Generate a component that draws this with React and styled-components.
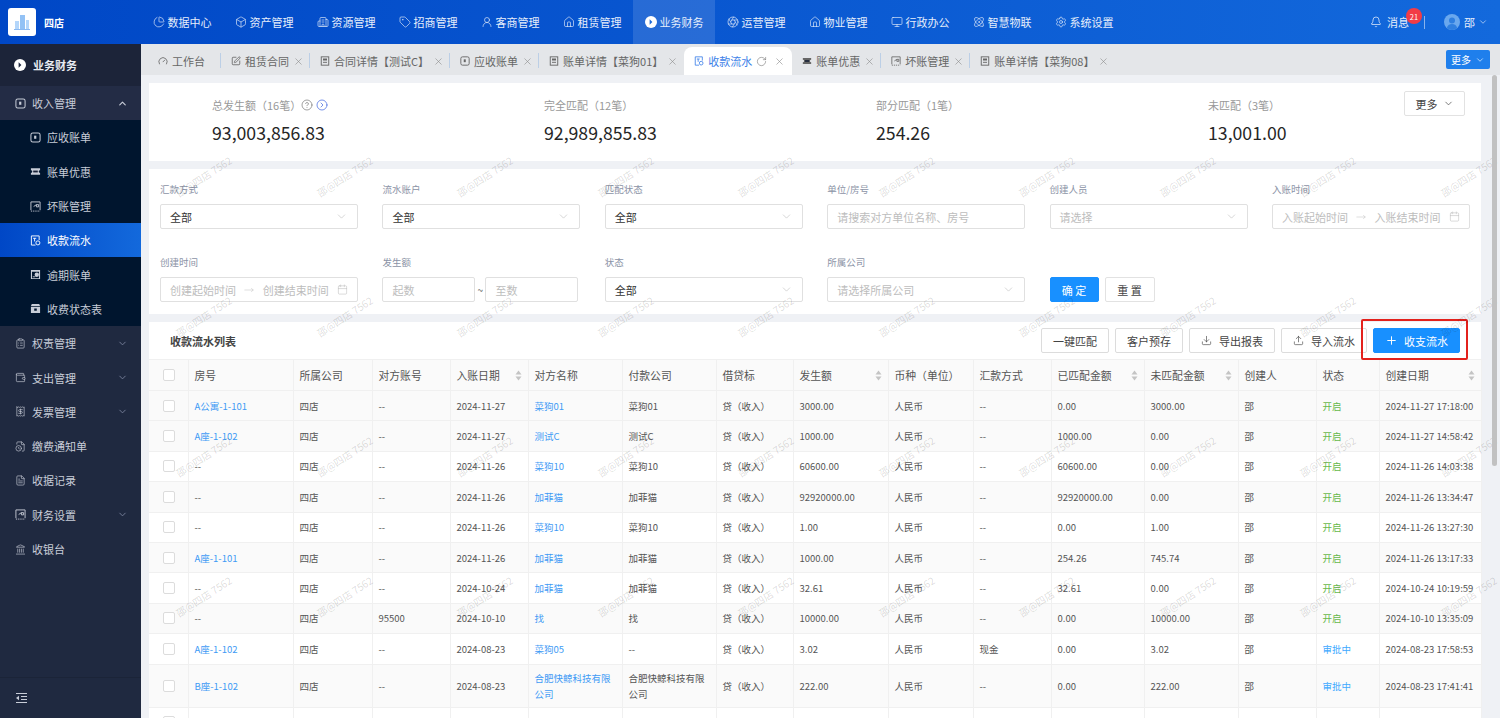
import React from 'react';
import styled, { createGlobalStyle } from 'styled-components';
import {
  ChartPie, Box, Building2, Tag, UserRound, House, Aperture, Monitor, Atom, Settings,
  Bell, ChevronDown, ChevronUp, Plus, Download, Upload, CircleHelp, CircleChevronRight,
  Calendar, MoveRight, X, RotateCw, Gauge, SquarePen, FileText, Receipt, ClipboardList,
  FileClock, Wallet, Landmark,
} from 'lucide-react';

const GlobalStyle = createGlobalStyle`
  html, body, #root {
    margin: 0;
    height: 100%;
    overflow: hidden;
  }
  body {
    font-family: "Noto Sans CJK SC", "Noto Sans", sans-serif;
    color: #333;
  }
  * {
    box-sizing: border-box;
  }
`;

// small drawn icons that the packages don't have
const BillIcon = ({ size = 11 }) => (
  <svg width={size} height={size} viewBox="0 0 12 12" fill="none" stroke="currentColor" strokeWidth="1.1">
    <rect x="1" y="1" width="10" height="10" rx="2" />
    <rect x="4.5" y="4" width="2.4" height="3.4" fill="currentColor" stroke="none" />
  </svg>
);

const TicketIcon = ({ size = 11 }) => (
  <svg width={size} height={size} viewBox="0 0 12 12" fill="currentColor">
    <path d="M1 2.5h10v2a1.5 1.5 0 0 0 0 3v2H1v-2a1.5 1.5 0 0 0 0-3z" />
    <rect x="3.5" y="5" width="5" height="2" fill="#1a2238" />
  </svg>
);

const BadDebtIcon = ({ size = 11 }) => (
  <svg width={size} height={size} viewBox="0 0 12 12" fill="none" stroke="currentColor" strokeWidth="1">
    <path d="M1 10V1h10v9" />
    <path d="M1 11h10" strokeDasharray="1.4 1" />
    <path d="M7 4h2.4v2.4H7zM4 6l3-2" />
  </svg>
);

const FlowIcon = ({ size = 11 }) => (
  <svg width={size} height={size} viewBox="0 0 12 12" fill="none" stroke="currentColor" strokeWidth="1">
    <path d="M6 11H1.5V1h8.5v4.5" />
    <path d="M3.4 3.6h3.4M5 3.6v3.4" />
    <circle cx="8.6" cy="8.6" r="2.2" />
  </svg>
);

const OverdueIcon = ({ size = 11 }) => (
  <svg width={size} height={size} viewBox="0 0 12 12" fill="currentColor">
    <path d="M1 1h10v10H1zM2.2 3v7h7.6V3z" fillRule="evenodd" />
    <circle cx="7.4" cy="6.2" r="2.4" />
    <rect x="3" y="8" width="2.4" height="1" />
  </svg>
);

const StatusIcon = ({ size = 11 }) => (
  <svg width={size} height={size} viewBox="0 0 12 12" fill="currentColor">
    <path d="M2 1h8l1 2.4H1z" />
    <path d="M1 4.2h10V11H1zM4.6 6v2.4h2.8V6z" fillRule="evenodd" />
  </svg>
);

const DetailIcon = ({ size = 10 }) => (
  <svg width={size} height={size} viewBox="0 0 12 12" fill="none" stroke="currentColor" strokeWidth="1.1">
    <rect x="1.5" y="1" width="9" height="10" />
    <rect x="3.6" y="3" width="4.8" height="2.4" fill="currentColor" stroke="none" />
    <path d="M3.6 7.6h4.8" />
  </svg>
);

const CoinIcon = ({ size = 12, hole = '#1f6ad8' }) => (
  <svg width={size} height={size} viewBox="0 0 12 12">
    <circle cx="6" cy="6" r="6" fill="#fff" />
    <path d="M4.6 3.2 7.4 6 4.6 8.8z" fill={hole} />
  </svg>
);

const CollapseIcon = () => (
  <svg width="13" height="12" viewBox="0 0 13 12" fill="none" stroke="currentColor" strokeWidth="1.2">
    <path d="M1 1.5h11M6 4.5h6M6 7.5h6M1 10.5h11" />
    <path d="M4 3.8v4.4L1 6z" fill="currentColor" stroke="none" />
  </svg>
);

const LogoIcon = () => (
  <svg width="16" height="16" viewBox="0 0 16 16" fill="#b4d6fa">
    <rect x="1" y="7" width="4" height="8" />
    <rect x="6" y="1" width="5" height="14" fill="#93c2f5" />
    <rect x="12" y="6" width="3" height="9" />
    <path d="M0 15h16v1H0z" fill="#8ab9f2" />
  </svg>
);

const AvatarIcon = () => (
  <svg width="16" height="16" viewBox="0 0 16 16">
    <circle cx="8" cy="8" r="8" fill="#6aa8ee" />
    <circle cx="8" cy="6.4" r="3" fill="#2f7fe0" />
    <path d="M2.8 14a5.4 5.4 0 0 1 10.4 0A8 8 0 0 1 2.8 14z" fill="#2f7fe0" />
  </svg>
);

const SortIcon = () => (
  <svg width="7" height="11" viewBox="0 0 7 11" fill="#c4c4c4">
    <path d="M3.5 0.5 6.5 4.5H0.5zM3.5 10.5 0.5 6.5H6.5z" />
  </svg>
);

const navItems = [
  { label: '数据中心', icon: <ChartPie size={12} strokeWidth={1.3} /> },
  { label: '资产管理', icon: <Box size={12} strokeWidth={1.3} /> },
  { label: '资源管理', icon: <Building2 size={12} strokeWidth={1.3} /> },
  { label: '招商管理', icon: <Tag size={12} strokeWidth={1.3} /> },
  { label: '客商管理', icon: <UserRound size={12} strokeWidth={1.3} /> },
  { label: '租赁管理', icon: <House size={12} strokeWidth={1.3} /> },
  { label: '业务财务', icon: <CoinIcon />, active: true },
  { label: '运营管理', icon: <Aperture size={12} strokeWidth={1.3} /> },
  { label: '物业管理', icon: <House size={12} strokeWidth={1.3} /> },
  { label: '行政办公', icon: <Monitor size={12} strokeWidth={1.3} /> },
  { label: '智慧物联', icon: <Atom size={12} strokeWidth={1.3} /> },
  { label: '系统设置', icon: <Settings size={12} strokeWidth={1.3} /> },
];

const tabs = [
  { label: '工作台', icon: <Gauge size={10} />, home: true },
  { label: '租赁合同', icon: <SquarePen size={10} /> },
  { label: '合同详情【测试C】', icon: <DetailIcon /> },
  { label: '应收账单', icon: <BillIcon size={10} /> },
  { label: '账单详情【菜狗01】', icon: <DetailIcon />, last: true },
  { label: '收款流水', icon: <FlowIcon size={10} />, active: true },
  { label: '账单优惠', icon: <TicketIcon size={10} /> },
  { label: '坏账管理', icon: <BadDebtIcon size={10} /> },
  { label: '账单详情【菜狗08】', icon: <DetailIcon />, last: true },
];

const subMenu = [
  { label: '应收账单', icon: <BillIcon /> },
  { label: '账单优惠', icon: <TicketIcon /> },
  { label: '坏账管理', icon: <BadDebtIcon /> },
  { label: '收款流水', icon: <FlowIcon />, active: true },
  { label: '逾期账单', icon: <OverdueIcon /> },
  { label: '收费状态表', icon: <StatusIcon /> },
];

const lowerMenu = [
  { label: '权责管理', icon: <ClipboardList size={11} strokeWidth={1.4} />, arrow: true },
  { label: '支出管理', icon: <Wallet size={11} strokeWidth={1.4} />, arrow: true },
  { label: '发票管理', icon: <Receipt size={11} strokeWidth={1.4} />, arrow: true },
  { label: '缴费通知单', icon: <FileClock size={11} strokeWidth={1.4} /> },
  { label: '收据记录', icon: <FileText size={11} strokeWidth={1.4} /> },
  { label: '财务设置', icon: <BadDebtIcon />, arrow: true },
  { label: '收银台', icon: <Landmark size={11} strokeWidth={1.4} /> },
];

const stats = [
  { label: '总发生额（16笔）', value: '93,003,856.83', help: true },
  { label: '完全匹配（12笔）', value: '92,989,855.83' },
  { label: '部分匹配（1笔）', value: '254.26' },
  { label: '未匹配（3笔）', value: '13,001.00' },
];

const columns = [
  { width: 39 },
  { width: 105, title: '房号' },
  { width: 79, title: '所属公司' },
  { width: 78, title: '对方账号' },
  { width: 78, title: '入账日期', sort: true },
  { width: 94, title: '对方名称' },
  { width: 94, title: '付款公司' },
  { width: 77, title: '借贷标' },
  { width: 95, title: '发生额', sort: true },
  { width: 85, title: '币种（单位）' },
  { width: 78, title: '汇款方式' },
  { width: 93, title: '已匹配金额', sort: true },
  { width: 94, title: '未匹配金额', sort: true },
  { width: 78, title: '创建人' },
  { width: 63, title: '状态' },
  { width: 102, title: '创建日期', sort: true },
];

const rows = [
  ['A公寓-1-101', '--', '2024-11-27', '菜狗01', '菜狗01', '3000.00', '--', '0.00', '3000.00', '开启', '2024-11-27 17:18:00'],
  ['A座-1-102', '--', '2024-11-27', '测试C', '测试C', '1000.00', '--', '1000.00', '0.00', '开启', '2024-11-27 14:58:42'],
  ['--', '--', '2024-11-26', '菜狗10', '菜狗10', '60600.00', '--', '60600.00', '0.00', '开启', '2024-11-26 14:03:38'],
  ['--', '--', '2024-11-26', '加菲猫', '加菲猫', '92920000.00', '--', '92920000.00', '0.00', '开启', '2024-11-26 13:34:47'],
  ['--', '--', '2024-11-26', '菜狗10', '菜狗10', '1.00', '--', '0.00', '1.00', '开启', '2024-11-26 13:27:30'],
  ['A座-1-101', '--', '2024-11-26', '加菲猫', '加菲猫', '1000.00', '--', '254.26', '745.74', '开启', '2024-11-26 13:17:33'],
  ['--', '--', '2024-10-24', '加菲猫', '加菲猫', '32.61', '--', '32.61', '0.00', '开启', '2024-10-24 10:19:59'],
  ['--', '95500', '2024-10-10', '找', '找', '10000.00', '--', '0.00', '10000.00', '开启', '2024-10-10 13:35:09'],
  ['A座-1-102', '--', '2024-08-23', '菜狗05', '--', '3.02', '现金', '0.00', '3.02', '审批中', '2024-08-23 17:58:53'],
  ['B座-1-102', '--', '2024-08-23', '合肥快鲸科技有限公司', '合肥快鲸科技有限公司', '222.00', '--', '0.00', '222.00', '审批中', '2024-08-23 17:41:41'],
];

const App = () => {
  return (
    <Page>
      <GlobalStyle />
      <Header>
        <Brand>
          <LogoBox><LogoIcon /></LogoBox>
          <BrandName>四店</BrandName>
        </Brand>
        <Nav>
          {navItems.map((item) => (
            <NavItem key={item.label} $active={item.active}>
              {item.icon}
              {item.label}
            </NavItem>
          ))}
        </Nav>
        <HeaderRight>
          <Bell size={12} strokeWidth={1.5} />
          <MessageText>
            消息
            <Badge>21</Badge>
          </MessageText>
          <HeaderDivider />
          <AvatarIcon />
          <UserName>邵</UserName>
          <ChevronDown size={10} strokeWidth={1.5} />
        </HeaderRight>
      </Header>

      <Body>
        <Sidebar>
          <SideTitle>
            <CoinIcon hole="#1f2940" />
            业务财务
          </SideTitle>
          <SideItem $open>
            <BillIcon />
            <SideLabel>收入管理</SideLabel>
            <ChevronUp size={11} strokeWidth={2.5} />
          </SideItem>
          <SubList>
            {subMenu.map((item) => (
              <SubItem key={item.label} $active={item.active}>
                {item.icon}
                {item.label}
              </SubItem>
            ))}
          </SubList>
          {lowerMenu.map((item) => (
            <SideItem key={item.label}>
              {item.icon}
              <SideLabel>{item.label}</SideLabel>
              {item.arrow && <ChevronDown size={11} strokeWidth={2} color="#77809a" />}
            </SideItem>
          ))}
          <SideFooter>
            <CollapseIcon />
          </SideFooter>
        </Sidebar>

        <Main>
          <TabBar>
            {tabs.map((tab, i) => (
              <Tab
                key={tab.label}
                $active={tab.active}
                $home={tab.home}
                $divider={!tab.active && !tab.last && i < tabs.length - 1}
              >
                {tab.icon}
                <span>{tab.label}</span>
                {tab.active && <RotateCw size={11} strokeWidth={1.3} color="#777" />}
                {!tab.home && <CloseIcon size={11} strokeWidth={1.3} $active={tab.active} />}
              </Tab>
            ))}
            <MoreTabs>
              更多
              <ChevronDown size={10} strokeWidth={1.5} />
            </MoreTabs>
          </TabBar>

          <Content>
            <SummaryCard>
              {stats.map((stat) => (
                <Stat key={stat.label}>
                  <StatLabel>
                    {stat.label}
                    {stat.help && (
                      <>
                        <HelpIcon size={12} strokeWidth={1.4} />
                        <CircleChevronRight size={12} strokeWidth={1.5} color="#4a6ee0" />
                      </>
                    )}
                  </StatLabel>
                  <StatValue>{stat.value}</StatValue>
                </Stat>
              ))}
              <SummaryMore>
                更多
                <ChevronDown size={11} strokeWidth={1.5} />
              </SummaryMore>
            </SummaryCard>

            <FilterCard>
              <Field>
                <FieldLabel>汇款方式</FieldLabel>
                <Control>全部<Arrow /></Control>
              </Field>
              <Field>
                <FieldLabel>流水账户</FieldLabel>
                <Control>全部<Arrow /></Control>
              </Field>
              <Field>
                <FieldLabel>匹配状态</FieldLabel>
                <Control>全部<Arrow /></Control>
              </Field>
              <Field>
                <FieldLabel>单位/房号</FieldLabel>
                <Control $empty>请搜索对方单位名称、房号</Control>
              </Field>
              <Field>
                <FieldLabel>创建人员</FieldLabel>
                <Control $empty>请选择<Arrow /></Control>
              </Field>
              <Field>
                <FieldLabel>入账时间</FieldLabel>
                <Control $empty>
                  入账起始时间
                  <MoveRight size={10} strokeWidth={1.2} />
                  入账结束时间
                  <Calendar size={11} strokeWidth={1.2} />
                </Control>
              </Field>
              <Field>
                <FieldLabel>创建时间</FieldLabel>
                <Control $empty>
                  创建起始时间
                  <MoveRight size={10} strokeWidth={1.2} />
                  创建结束时间
                  <Calendar size={11} strokeWidth={1.2} />
                </Control>
              </Field>
              <Field>
                <FieldLabel>发生额</FieldLabel>
                <RangeRow>
                  <RangeControl $empty>起数</RangeControl>
                  <RangeDash>~</RangeDash>
                  <RangeControl $empty>至数</RangeControl>
                </RangeRow>
              </Field>
              <Field>
                <FieldLabel>状态</FieldLabel>
                <Control>全部<Arrow /></Control>
              </Field>
              <Field>
                <FieldLabel>所属公司</FieldLabel>
                <Control $empty>请选择所属公司<Arrow /></Control>
              </Field>
              <FilterActions>
                <FilterButton $primary>确 定</FilterButton>
                <FilterButton>重 置</FilterButton>
              </FilterActions>
            </FilterCard>

            <TableCard>
              <Toolbar>
                <ListTitle>收款流水列表</ListTitle>
                <ToolButton>一键匹配</ToolButton>
                <ToolButton>客户预存</ToolButton>
                <ToolButton><Download size={11} strokeWidth={1.4} />导出报表</ToolButton>
                <ToolButton><Upload size={11} strokeWidth={1.4} />导入流水</ToolButton>
                <PrimaryWrap>
                  <ToolButton $primary><Plus size={13} strokeWidth={1.8} />收支流水</ToolButton>
                  <RedMark />
                </PrimaryWrap>
              </Toolbar>
              <Table>
                <colgroup>
                  {columns.map((col, i) => (
                    <col key={i} width={col.width} />
                  ))}
                </colgroup>
                <thead>
                  <tr>
                    {columns.map((col, i) => (
                      <Th key={i}>
                        {i === 0 ? <Check /> : (
                          <ThInner>
                            {col.title}
                            {col.sort && <SortIcon />}
                          </ThInner>
                        )}
                      </Th>
                    ))}
                  </tr>
                </thead>
                <tbody>
                  {rows.map((r, i) => (
                    <Row key={i} $grey={i === 0 || i % 2 === 1} $tall={i === 9}>
                      <Td><Check /></Td>
                      <Td $link={r[0] !== '--'}>{r[0]}</Td>
                      <Td>四店</Td>
                      <Td>{r[1]}</Td>
                      <Td>{r[2]}</Td>
                      <Td $link>{r[3]}</Td>
                      <Td>{r[4]}</Td>
                      <Td>贷（收入）</Td>
                      <Td>{r[5]}</Td>
                      <Td>人民币</Td>
                      <Td>{r[6]}</Td>
                      <Td>{r[7]}</Td>
                      <Td>{r[8]}</Td>
                      <Td>邵</Td>
                      <Td $status={r[9]}>{r[9]}</Td>
                      <Td>{r[10]}</Td>
                    </Row>
                  ))}
                  <Row>
                    {columns.map((col, i) => (
                      <Td key={i}>{i === 0 && <Check />}</Td>
                    ))}
                  </Row>
                </tbody>
              </Table>
            </TableCard>

            <Watermarks>
              {Array.from({ length: 40 }).map((_, i) => (
                <Mark key={i}>邵@四店 7562</Mark>
              ))}
            </Watermarks>
            <ScrollThumb />
          </Content>
        </Main>
      </Body>
    </Page>
  );
};

const Page = styled.div`
  height: 100vh;
  display: flex;
  flex-direction: column;
  overflow: hidden;
`;

const Header = styled.header`
  height: 44px;
  flex: none;
  display: flex;
  align-items: stretch;
  color: #e6eefb;
  background: linear-gradient(90deg, #0047c6 0%, #1369dc 100%);
`;

const Brand = styled.div`
  width: 141px;
  flex: none;
  display: flex;
  align-items: center;
  gap: 8px;
  padding-left: 8px;
`;

const LogoBox = styled.div`
  width: 28px;
  height: 28px;
  border-radius: 3px;
  background: #fff;
  display: flex;
  align-items: center;
  justify-content: center;
`;

const BrandName = styled.span`
  font-size: 10px;
  font-weight: 700;
  color: #fff;
`;

const Nav = styled.nav`
  display: flex;
`;

const NavItem = styled.div`
  width: 82px;
  display: flex;
  align-items: center;
  justify-content: center;
  gap: 3px;
  font-size: 11px;
  white-space: nowrap;
  background: ${(p) => (p.$active ? 'rgba(255, 255, 255, 0.13)' : 'transparent')};
`;

const HeaderRight = styled.div`
  margin-left: auto;
  display: flex;
  align-items: center;
  padding-right: 12px;
`;

const MessageText = styled.span`
  position: relative;
  font-size: 11px;
  margin-left: 5px;
`;

const Badge = styled.span`
  position: absolute;
  left: 19px;
  top: -6px;
  width: 16px;
  height: 16px;
  border-radius: 50%;
  background: #f23c46;
  color: #fff;
  font-size: 7.5px;
  display: flex;
  align-items: center;
  justify-content: center;
`;

const HeaderDivider = styled.span`
  width: 1px;
  height: 13px;
  background: rgba(255, 255, 255, 0.5);
  margin: 0 19px 0 15px;
`;

const UserName = styled.span`
  font-size: 11px;
  margin: 0 3px 0 4px;
`;

const Body = styled.div`
  flex: 1;
  min-height: 0;
  display: flex;
`;

const Sidebar = styled.aside`
  width: 141px;
  flex: none;
  display: flex;
  flex-direction: column;
  background: #1f2940;
  color: #c8cdd8;
  font-size: 11px;
`;

const SideTitle = styled.div`
  height: 42px;
  flex: none;
  display: flex;
  align-items: center;
  gap: 7px;
  padding-left: 14px;
  color: #e8ebf1;
  font-weight: 700;
  background: #1c2439;
`;

const SideItem = styled.div`
  height: 34.3px;
  flex: none;
  display: flex;
  align-items: center;
  gap: 6px;
  padding: 0 13px 0 15px;
  background: ${(p) => (p.$open ? '#232c45' : 'transparent')};
`;

const SideLabel = styled.span`
  flex: 1;
`;

const SubList = styled.div`
  background: #00152e;
`;

const SubItem = styled.div`
  height: 34.3px;
  display: flex;
  align-items: center;
  gap: 6px;
  padding-left: 30px;
  color: ${(p) => (p.$active ? '#fff' : '#c8cdd8')};
  background: ${(p) => (p.$active ? 'linear-gradient(90deg, #0047c6 0%, #1369dc 100%)' : 'transparent')};
`;

const SideFooter = styled.div`
  margin-top: auto;
  height: 41px;
  flex: none;
  display: flex;
  align-items: center;
  padding-left: 15px;
  border-top: 1px solid #1b2438;
`;

const Main = styled.main`
  flex: 1;
  min-width: 0;
  display: flex;
  flex-direction: column;
`;

const TabBar = styled.div`
  height: 31px;
  flex: none;
  display: flex;
  align-items: flex-end;
  padding: 0 10px 0 7px;
  background: #e4e6e9;
`;

const tabPadding = (p) => {
  if (p.$home) return '0 16px 0 10px';
  if (p.$active) return '0 7px 0 10px';
  return '0 6px 0 10px';
};

const Tab = styled.div`
  position: relative;
  height: 28px;
  display: flex;
  align-items: center;
  gap: 4px;
  padding: ${tabPadding};
  font-size: 11px;
  white-space: nowrap;
  color: ${(p) => (p.$active ? '#3c7fe8' : '#666')};
  background: ${(p) => (p.$active ? '#fff' : 'transparent')};
  border-radius: ${(p) => (p.$active ? '8px 8px 0 0' : '0')};

  &::after {
    content: '';
    display: ${(p) => (p.$divider ? 'block' : 'none')};
    position: absolute;
    right: 0;
    top: 6px;
    height: 15px;
    width: 1px;
    background: #bccfe6;
  }
`;

const CloseIcon = styled(X)`
  color: #888;
  margin-left: ${(p) => (p.$active ? '3px' : '0')};
`;

const MoreTabs = styled.div`
  margin: 0 0 6px auto;
  width: 44px;
  height: 19px;
  flex: none;
  display: flex;
  align-items: center;
  justify-content: center;
  gap: 4px;
  border-radius: 2px;
  font-size: 10px;
  color: #fff;
  background: #1f7fec;
`;

const Content = styled.div`
  position: relative;
  flex: 1;
  min-height: 0;
  overflow: hidden;
  display: flex;
  flex-direction: column;
  gap: 8px;
  padding: 8px 19px 0 8px;
  background: #eff1f5;
`;

// the page's scrollbar, headless chrome doesn't paint a real one
const ScrollThumb = styled.div`
  position: absolute;
  top: 0;
  right: 3px;
  width: 5px;
  height: 391px;
  border-radius: 3px;
  background: #c1c1c1;
`;

const SummaryCard = styled.section`
  flex: none;
  height: 78px;
  display: grid;
  grid-template-columns: repeat(4, 332px);
  padding: 14px 0 0 63px;
  background: #fff;
  position: relative;
`;

const Stat = styled.div`
  display: flex;
  flex-direction: column;
  gap: 6px;
`;

const StatLabel = styled.div`
  display: flex;
  align-items: center;
  gap: 3px;
  font-size: 11px;
  line-height: 16px;
  color: #999;
`;

const HelpIcon = styled(CircleHelp)`
  color: #777;
  margin-left: -3px;
`;

const StatValue = styled.div`
  font-size: 17.7px;
  line-height: 26px;
  color: #262626;
`;

// sits in the card's corner, beside the stats
const SummaryMore = styled.div`
  position: absolute;
  right: 16px;
  top: 8px;
  width: 61px;
  height: 25px;
  display: flex;
  align-items: center;
  justify-content: center;
  gap: 5px;
  font-size: 11px;
  color: #444;
  background: #fff;
  border: 1px solid #e2e2e2;
  border-radius: 2px;
`;

const FilterCard = styled.section`
  flex: none;
  height: 145px;
  display: grid;
  grid-template-columns: repeat(6, 198px);
  column-gap: 24.4px;
  row-gap: 26px;
  align-content: start;
  padding: 13px 0 0 11px;
  background: #fff;
`;

const Field = styled.div`
  display: flex;
  flex-direction: column;
  gap: 8px;
`;

const FieldLabel = styled.div`
  font-size: 9.5px;
  line-height: 14px;
  color: #8b93a6;
`;

const Control = styled.div`
  height: 25px;
  display: flex;
  align-items: center;
  justify-content: space-between;
  padding: 0 9px;
  font-size: 11px;
  color: ${(p) => (p.$empty ? '#bdbdbd' : '#333')};
  background: #fff;
  border: 1px solid #e0e0e0;
  border-radius: 2px;
  white-space: nowrap;
`;

const Arrow = styled(ChevronDown).attrs({ size: 13, strokeWidth: 1 })`
  color: #b5b5b5;
`;

const RangeRow = styled.div`
  width: 196px;
  display: flex;
  align-items: center;
`;

const RangeControl = styled(Control)`
  flex: 1;
`;

const RangeDash = styled.span`
  width: 10px;
  text-align: center;
  font-size: 10px;
  color: #666;
`;

const FilterActions = styled.div`
  display: flex;
  align-items: flex-end;
  gap: 6px;
`;

const FilterButton = styled.div`
  width: ${(p) => (p.$primary ? '49px' : '50px')};
  height: 25px;
  display: flex;
  align-items: center;
  justify-content: center;
  font-size: 11px;
  border-radius: 2px;
  color: ${(p) => (p.$primary ? '#fff' : '#444')};
  background: ${(p) => (p.$primary ? '#1890ff' : '#fff')};
  border: 1px solid ${(p) => (p.$primary ? '#1890ff' : '#e2e2e2')};
`;

const TableCard = styled.section`
  flex: none;
  background: #fff;
`;

const Toolbar = styled.div`
  height: 37px;
  display: flex;
  align-items: center;
  gap: 6px;
  padding: 0 21px;
`;

const ListTitle = styled.h3`
  margin: 0 auto 0 0;
  font-size: 11px;
  font-weight: 700;
  color: #444;
`;

const ToolButton = styled.div`
  height: 25px;
  display: flex;
  align-items: center;
  justify-content: center;
  gap: ${(p) => (p.$primary ? '6px' : '7px')};
  padding: 0 11px;
  font-size: 11px;
  white-space: nowrap;
  border-radius: 2px;
  color: ${(p) => (p.$primary ? '#fff' : '#444')};
  background: ${(p) => (p.$primary ? '#1890ff' : '#fff')};
  border: 1px solid ${(p) => (p.$primary ? '#1890ff' : '#dcdcdc')};
`;

const PrimaryWrap = styled.div`
  position: relative;
`;

// annotation box drawn over the screenshot
const RedMark = styled.div`
  position: absolute;
  left: -12px;
  right: -8px;
  top: -9px;
  bottom: -7px;
  border: 2px solid #e3211c;
  border-radius: 2px;
  pointer-events: none;
`;

const Table = styled.table`
  width: 1332px;
  table-layout: fixed;
  border-collapse: collapse;
`;

const Th = styled.th`
  height: 31px;
  padding: 0 6px;
  font-size: 10.8px;
  font-weight: 400;
  text-align: left;
  color: #555;
  background: #fafafa;
  border: 1px solid #f0f0f0;
  border-left: 0;
  white-space: nowrap;

  &:first-child {
    padding-left: 14px;
  }
`;

const ThInner = styled.div`
  display: flex;
  align-items: center;
  justify-content: space-between;
`;

const Row = styled.tr`
  height: ${(p) => (p.$tall ? '43px' : '30.4px')};
  background: ${(p) => (p.$grey ? '#fafafa' : '#fff')};
`;

const statusColor = { 开启: '#67b84a', 审批中: '#40a9ff' };

const Td = styled.td`
  padding: 0 6px;
  font-size: 9.5px;
  line-height: 16px;
  color: ${(p) => statusColor[p.$status] || (p.$link ? '#3f9bf5' : '#555')};
  border-bottom: 1px solid #f0f0f0;
  border-right: 1px solid #f0f0f0;

  &:first-child {
    padding-left: 14px;
  }
`;

const Check = styled.div`
  width: 12px;
  height: 12px;
  background: #fff;
  border: 1px solid #dcdcdc;
  border-radius: 2px;
`;

// watermark tiles painted over the page content
const Watermarks = styled.div`
  position: absolute;
  top: 95px;
  left: 31px;
  right: 0;
  display: grid;
  grid-template-columns: repeat(10, 140.5px);
  grid-auto-rows: 140px;
  pointer-events: none;
`;

const Mark = styled.div`
  width: 63px;
  height: 14px;
  line-height: 14px;
  text-align: center;
  white-space: nowrap;
  font-size: 10px;
  color: rgba(0, 0, 0, 0.15);
  transform: rotate(-33deg);
`;

export default App;
